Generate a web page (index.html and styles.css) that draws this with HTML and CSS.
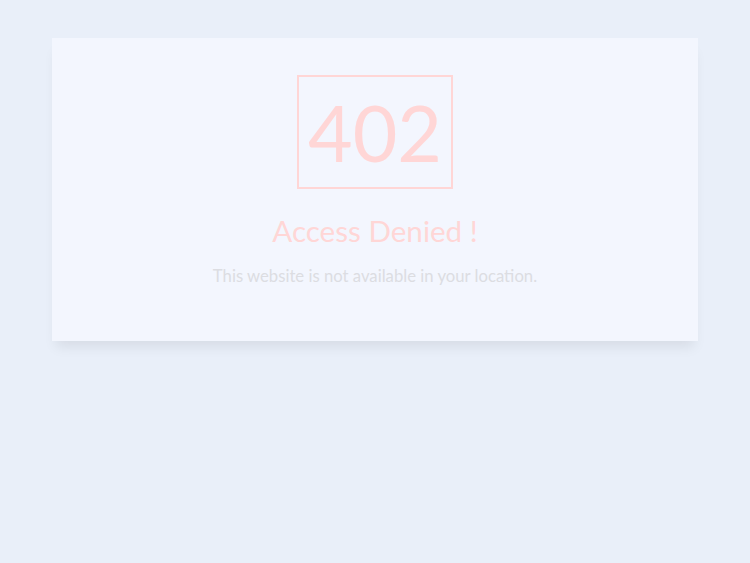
FILE: index.html
```html
<!DOCTYPE html>
<html>
<head>
  <title>Access Denied</title>
  <link rel="stylesheet" href="styles.css">
</head>
<body>
  <div class="card">
    <div class="code">402</div>
    <h1>Access Denied !</h1>
    <p>This website is not available in your location.</p>
  </div>
</body>
</html>
```

FILE: styles.css
```css
body {
  font-family: Lato, sans-serif;
  margin: 0;
  padding: 38px 52px;
  background-color: #e9eff9;
}
.card {
  background-color: #f3f6fe;
  text-align: center;
  padding: 37px 20px 55px;
  box-shadow: 0 10px 12px -4px rgba(0, 0, 0, 0.08);
}
.code {
  display: inline-block;
  border: 2px solid #ffd6d6;
  color: #ffd6d6;
  font-size: 77px;
  line-height: 110px;
  padding: 0 9px;
}
h1 {
  color: #ffd6d6;
  font-size: 29.6px;
  font-weight: normal;
  margin: 24px 0 0;
}
p {
  color: #dcdde2;
  font-size: 16.7px;
  margin: 18px 0 0;
}
```
